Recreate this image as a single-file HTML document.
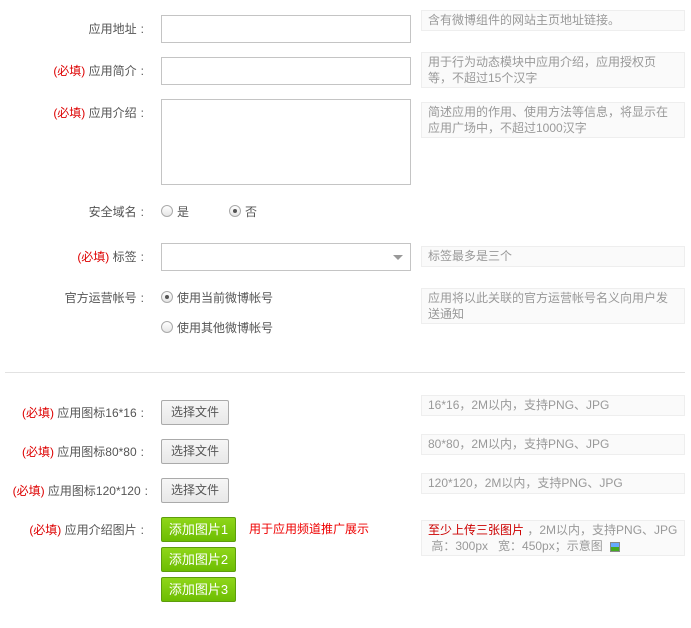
<!DOCTYPE html>
<html><head><meta charset="utf-8"><style>
*{box-sizing:border-box;margin:0;padding:0}
body{width:691px;height:628px;background:#fff;font-family:"Liberation Sans","Noto Sans CJK SC",sans-serif;font-size:12px;color:#555;position:relative;overflow:hidden}
.a{position:absolute;white-space:nowrap}
.l{position:absolute;right:547px;white-space:nowrap;line-height:16px}
.l i{font-style:normal;margin-left:4px}
.r{color:#d00}
.in{position:absolute;left:161px;width:250px;border:1px solid #c4c4c4;background:#fff}
.h{position:absolute;left:421px;width:264px;background:#fafafa;border:1px solid #eee;color:#999;line-height:16px;padding:1px 6px;white-space:normal}
.rad{position:absolute;width:12px;height:12px;border-radius:50%;border:1px solid #aaa;background:linear-gradient(#fff,#e6e6e6)}
.rad.on::after{content:"";position:absolute;left:3px;top:3px;width:4px;height:4px;border-radius:50%;background:#555}
.btn{position:absolute;left:161px;width:68px;height:25px;border:1px solid #aaa;border-radius:2px;background:linear-gradient(#f6f6f6,#e8e8e8);text-align:center;line-height:23px;color:#555}
.g{position:absolute;left:161px;width:75px;height:25px;border:1px solid #5d9e0c;border-radius:2px;background:linear-gradient(#8fd61a,#6dbd02);color:#fff;text-align:center;line-height:23px;font-size:13px}
</style></head><body>
<div class="l" style="top:21px">应用地址<i>:</i></div>
<div class="in" style="top:15px;height:28px"></div>
<div class="h" style="top:10px;height:21px">含有微博组件的网站主页地址链接。</div>

<div class="l" style="top:63px"><span class="r">(必填)</span> 应用简介<i>:</i></div>
<div class="in" style="top:57px;height:28px"></div>
<div class="h" style="top:52px;height:36px">用于行为动态模块中应用介绍，应用授权页等，不超过15个汉字</div>

<div class="l" style="top:105px"><span class="r">(必填)</span> 应用介绍<i>:</i></div>
<div class="in" style="top:99px;height:86px"></div>
<div class="h" style="top:102px;height:36px">简述应用的作用、使用方法等信息，将显示在应用广场中，不超过1000汉字</div>

<div class="l" style="top:204px">安全域名<i>:</i></div>
<div class="rad" style="left:161px;top:205px"></div><div class="a" style="left:177px;top:204px;line-height:16px">是</div>
<div class="rad on" style="left:229px;top:205px"></div><div class="a" style="left:245px;top:204px;line-height:16px">否</div>

<div class="l" style="top:249px"><span class="r">(必填)</span> 标签<i>:</i></div>
<div class="in" style="top:243px;height:28px"></div>
<div class="a" style="left:393px;top:255px;width:0;height:0;border-left:5px solid transparent;border-right:5px solid transparent;border-top:5px solid #999"></div>
<div class="h" style="top:246px;height:21px">标签最多是三个</div>

<div class="l" style="top:290px">官方运营帐号<i>:</i></div>
<div class="rad on" style="left:161px;top:291px"></div><div class="a" style="left:177px;top:290px;line-height:16px">使用当前微博帐号</div>
<div class="rad" style="left:161px;top:321px"></div><div class="a" style="left:177px;top:320px;line-height:16px">使用其他微博帐号</div>
<div class="h" style="top:288px;height:36px">应用将以此关联的官方运营帐号名义向用户发送通知</div>

<div class="a" style="left:5px;top:372px;width:680px;height:1px;background:#e2e2e2"></div>

<div class="l" style="top:405px"><span class="r">(必填)</span> 应用图标16*16<i>:</i></div>
<div class="btn" style="top:400px">选择文件</div>
<div class="h" style="top:395px;height:21px">16*16，2M以内，支持PNG、JPG</div>

<div class="l" style="top:444px"><span class="r">(必填)</span> 应用图标80*80<i>:</i></div>
<div class="btn" style="top:439px">选择文件</div>
<div class="h" style="top:434px;height:21px">80*80，2M以内，支持PNG、JPG</div>

<div class="l" style="top:483px;right:543px"><span class="r">(必填)</span> 应用图标120*120<i>:</i></div>
<div class="btn" style="top:478px">选择文件</div>
<div class="h" style="top:473px;height:21px">120*120，2M以内，支持PNG、JPG</div>

<div class="l" style="top:522px"><span class="r">(必填)</span> 应用介绍图片<i>:</i></div>
<div class="g" style="top:517px">添加图片1</div>
<div class="g" style="top:547px">添加图片2</div>
<div class="g" style="top:577px">添加图片3</div>
<div class="a" style="left:249px;top:521px;line-height:16px;color:#e00">用于应用频道推广展示</div>
<div class="h" style="top:520px;height:36px"><span style="color:#c00">至少上传三张图片</span> ，2M以内，支持PNG、JPG<br>&nbsp;高：300px &nbsp; 宽：450px；示意图 <span style="display:inline-block;width:10px;height:10px;border:1px solid #888;background:linear-gradient(#6af 50%,#4a2 50%);vertical-align:middle;margin-left:4px"></span></div>
</body></html>
